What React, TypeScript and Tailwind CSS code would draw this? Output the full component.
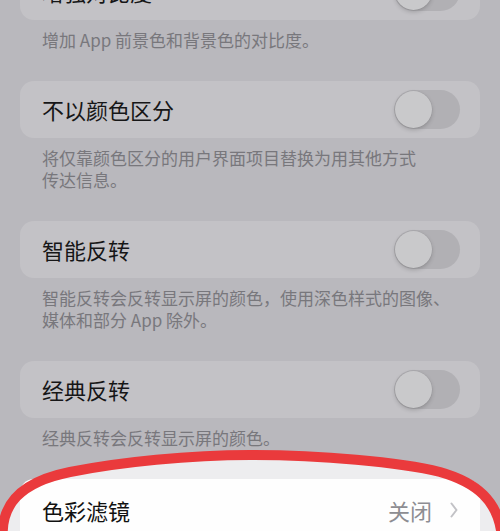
import React from 'react';

interface RowProps {
  title: string;
  desc?: string[];
  first?: boolean;
}

function Toggle() {
  return (
    <div className="w-[66px] h-[39px] rounded-full bg-[#b1b0b4] p-[1px] flex items-center">
      <div className="w-[37px] h-[37px] rounded-full bg-[#c9c9cb] shadow-[0_2px_4px_rgba(0,0,0,0.18),0_0_0_0.5px_rgba(0,0,0,0.06)]" />
    </div>
  );
}

function ToggleRow({ title, desc, first }: RowProps) {
  return (
    <div>
      <div
        className={`mx-5 h-[57px] rounded-[14px] bg-[#c3c2c6] flex items-center justify-between pl-[22px] pr-5 ${
          first ? '-mt-[37px]' : ''
        }`}
      >
        <span className="text-[22px] text-[#161617]">{title}</span>
        <Toggle />
      </div>
      {desc && (
        <div className="pl-[42px] pr-6 pt-[9px] pb-[30px] text-[17px] leading-[22px] text-[#78777c]">
          {desc.map((line, i) => (
            <div key={i}>{line}</div>
          ))}
        </div>
      )}
    </div>
  );
}

const rows: RowProps[] = [
  { title: '增强对比度', desc: ['增加 App 前景色和背景色的对比度。'], first: true },
  { title: '不以颜色区分', desc: ['将仅靠颜色区分的用户界面项目替换为用其他方式', '传达信息。'] },
  { title: '智能反转', desc: ['智能反转会反转显示屏的颜色，使用深色样式的图像、', '媒体和部分 App 除外。'] },
  { title: '经典反转', desc: ['经典反转会反转显示屏的颜色。'] },
];

const ringPath =
  'M 3 540 C 0 505 20 482 70 472 C 120 462 190 455 250 455 C 320 455 400 462 440 472 C 475 482 500 500 502 540';

export default function App() {
  return (
    <div
      className="relative w-[500px] h-[531px] overflow-hidden bg-[#b9b8bd]"
      style={{ fontFamily: '"Noto Sans CJK SC", "Noto Sans", sans-serif' }}
    >
      {/* spotlight behind the highlighted row */}
      <svg className="absolute inset-0 z-0" width="500" height="531" viewBox="0 0 500 531">
        <path d={ringPath + ' Z'} fill="#ededef" />
      </svg>

      <div className="relative z-10">
        {rows.map((r) => (
          <ToggleRow key={r.title} {...r} />
        ))}

        {/* 色彩滤镜 */}
        <div className="mx-5 h-[60px] rounded-t-[14px] bg-[#fefefe] flex items-center justify-between pl-[22px] pr-[22px] pt-[2px]">
          <span className="text-[22px] text-[#111]">色彩滤镜</span>
          <div className="flex items-center gap-[18px]">
            <span className="text-[22px] text-[#8d8d92]">关闭</span>
            <svg width="8" height="16" viewBox="0 0 8 16" fill="none">
              <path d="M1.5 1.5 L6.5 8 L1.5 14.5" stroke="#c2c2c6" strokeWidth="2" strokeLinecap="round" strokeLinejoin="round" />
            </svg>
          </div>
        </div>
      </div>

      {/* red marker ring */}
      <svg className="absolute inset-0 z-20 pointer-events-none" width="500" height="531" viewBox="0 0 500 531">
        <path d={ringPath} fill="none" stroke="#ea3a3c" strokeWidth="10" strokeLinecap="round" />
      </svg>
    </div>
  );
}
